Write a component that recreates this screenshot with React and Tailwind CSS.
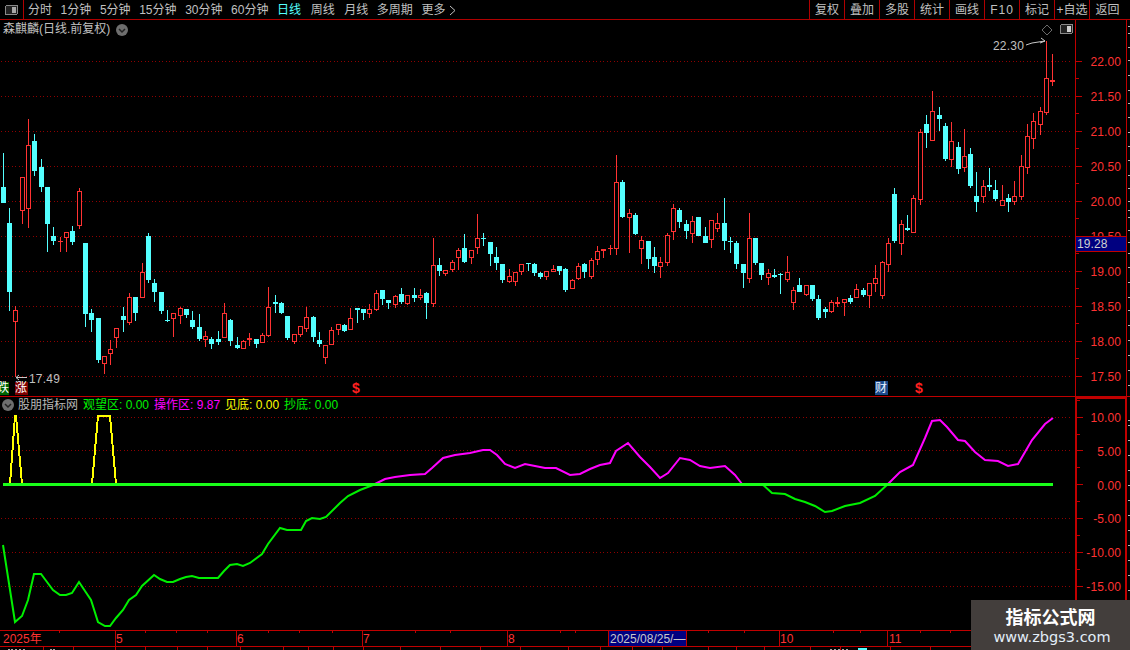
import React from "react";

const C = [
[3,153,187,203,203,0],[9,208,223,292,311,0],[15,306,310,322,377,1],[22,177,177,211,224,1],[28,119,145,209,228,1],[34,134,141,171,176,0],[41,159,167,187,192,0],[47,187,187,224,252,0],[53,227,236,241,245,0],[60,237,241,242,252,1],[66,232,232,238,252,1],[72,226,231,242,245,0],[79,188,191,226,229,1],[85,243,243,314,327,0],[91,309,313,320,332,0],[98,318,318,360,363,0],[104,356,356,364,374,1],[110,340,349,354,365,1],[116,328,328,338,348,1],[123,307,316,320,332,0],[129,293,297,323,325,1],[135,297,297,313,321,0],[142,263,272,298,298,1],[148,233,236,280,283,0],[154,279,283,292,302,0],[161,292,292,311,314,0],[167,310,320,321,322,0],[173,313,313,319,337,1],[180,307,308,316,324,1],[186,309,309,315,318,0],[192,311,320,327,329,0],[199,314,327,339,341,0],[205,331,336,340,347,1],[211,337,339,344,349,0],[218,331,339,342,345,0],[224,303,313,338,338,1],[230,319,320,341,346,0],[237,337,345,348,349,0],[243,340,341,349,349,1],[249,333,338,340,346,1],[256,339,339,344,348,0],[262,333,335,343,343,1],[268,287,307,336,337,1],[275,295,302,304,313,0],[281,302,303,313,314,0],[287,316,316,338,340,0],[294,334,334,342,344,1],[300,326,326,335,337,1],[306,307,317,329,332,1],[313,316,317,337,342,0],[319,332,340,344,347,0],[325,345,345,358,364,1],[331,327,330,345,345,1],[338,324,324,330,335,1],[344,324,325,331,332,0],[350,308,318,330,330,1],[357,308,308,310,323,0],[363,309,309,313,320,0],[369,304,309,314,318,1],[376,290,293,310,311,1],[382,290,290,299,305,0],[388,300,300,303,309,0],[395,295,296,305,308,1],[401,288,294,302,304,0],[407,295,295,304,305,1],[414,288,295,298,302,0],[420,289,295,298,300,1],[426,292,293,303,319,0],[433,238,265,304,307,1],[439,258,265,271,276,0],[445,270,270,274,276,1],[452,260,262,270,272,1],[458,248,250,258,270,1],[464,234,248,262,263,0],[471,250,250,258,264,1],[477,214,238,248,254,1],[483,233,238,239,246,0],[490,242,242,254,266,0],[496,247,257,263,270,0],[502,264,264,280,283,0],[509,269,276,282,283,1],[515,272,272,282,286,1],[521,264,264,272,275,1],[528,263,263,264,271,0],[534,263,264,273,276,0],[540,272,273,277,279,0],[546,271,271,277,280,1],[553,265,269,272,272,1],[559,266,266,271,275,0],[565,268,269,290,292,0],[572,279,280,289,289,1],[578,263,266,279,280,1],[584,263,264,272,278,0],[591,258,260,277,279,1],[597,246,251,260,265,1],[603,249,249,251,258,1],[610,245,248,249,255,1],[616,155,182,249,255,1],[622,180,182,217,218,0],[629,209,213,218,253,1],[635,213,215,234,235,0],[641,236,240,249,264,1],[648,241,241,259,269,0],[654,247,257,266,273,0],[660,257,262,267,278,1],[667,233,235,263,266,1],[673,204,208,232,240,1],[679,208,210,222,228,0],[686,220,224,231,239,0],[692,216,221,234,243,1],[698,217,217,236,236,0],[705,227,236,243,243,0],[711,220,220,240,248,1],[717,213,223,229,232,1],[724,198,223,241,250,0],[730,237,241,242,253,0],[736,241,243,264,269,0],[743,264,264,273,288,0],[749,213,238,279,283,1],[755,238,238,263,265,0],[761,263,263,275,280,0],[768,269,273,278,285,1],[774,269,275,277,278,0],[780,273,274,275,294,0],[787,256,272,280,282,1],[793,287,290,303,310,1],[799,278,285,292,292,0],[806,285,285,295,296,1],[812,285,285,299,301,0],[818,295,299,318,320,0],[825,307,309,312,318,0],[831,300,302,312,313,1],[837,297,302,304,307,1],[844,299,299,303,316,1],[850,295,298,302,304,0],[856,284,289,298,298,1],[863,288,290,295,297,0],[869,283,283,296,308,1],[875,265,278,284,292,1],[882,261,262,296,299,1],[888,238,243,265,272,1],[894,188,194,241,243,0],[901,220,224,244,255,1],[907,215,228,230,231,0],[913,195,198,233,233,1],[920,129,132,200,205,1],[926,115,124,133,148,0],[932,91,111,141,141,1],[939,107,115,119,131,0],[945,123,126,159,161,0],[951,122,141,160,167,1],[958,142,147,169,174,0],[964,129,156,168,172,1],[970,148,154,186,188,0],[976,172,196,202,212,0],[983,180,186,197,203,1],[989,168,185,187,191,0],[995,180,190,199,201,0],[1002,185,200,206,206,1],[1008,194,198,202,212,0],[1014,181,196,202,205,1],[1021,155,166,197,200,1],[1027,124,136,168,174,1],[1033,113,121,139,149,1],[1040,107,111,125,135,1],[1046,41,78,113,115,1],[1052,54,80,82,86,1],
];

const green1 = "3,545 15,622 22,616 28,600 34,574 41,574 47,582 53,590 60,595 66,595 72,593 79,582 85,591 91,600 98,622 105,626 110,626 116,618 123,610 129,600 136,595 142,586 154,575 160,579 167,582 173,582 180,579 186,577 192,576 199,578 218,578 224,571 230,565 237,564 243,566 250,563 262,554 268,544 280,528 287,530 301,530 306,521 312,518 320,519 326,517 340,503 348,496 360,490 373,485";
const magenta = "373,485 385,479 395,477 410,475 425,474 432,468 443,458 455,455 470,453 483,450 490,450 497,455 505,464 515,468 525,464 535,466 545,468 556,468 570,475 580,474 590,469 600,465 610,463 616,451 628,443 640,457 650,467 660,478 668,473 680,458 690,460 700,466 710,468 725,466 735,475 742,484";
const green2 = "742,484 762,484 772,493 785,494 795,499 805,502 815,506 825,512 832,511 845,506 860,503 875,496 888,484";
const magenta2 = "888,484 900,472 913,465 925,438 932,421 940,420 947,427 958,440 965,441 975,452 985,460 998,461 1008,466 1018,464 1032,440 1045,424 1053,418";

const font = "[font-family:'Liberation_Sans','Noto_Sans_CJK_SC',sans-serif]";

function Candles() {
  return C.map(([x, h, t, b, l, r], i) => {
    const col = r ? "#ff3232" : "#54ffff";
    const thin = b - t <= 1;
    return (
      <g key={i}>
        <rect x={x} y={h} width={1} height={Math.max(1, l - h)} fill={col} />
        {r && !thin ? (
          <rect x={x - 1.5} y={t + 0.5} width={4} height={b - t - 1} fill="#000" stroke={col} strokeWidth={1} />
        ) : (
          <rect x={x - 2} y={t} width={5} height={Math.max(1, b - t)} fill={col} />
        )}
      </g>
    );
  });
}

function Chevron({ className }) {
  return (
    <svg width="12" height="12" viewBox="0 0 12 12" className={className}>
      <circle cx="6" cy="6" r="6" fill="#6e6e6e" />
      <polyline points="3,5 6,8 9,5" fill="none" stroke="#222" strokeWidth="1.5" />
    </svg>
  );
}

function PanelIcon({ bright }) {
  return (
    <svg width="13" height="10" viewBox="0 0 13 10" shapeRendering="crispEdges">
      <rect x="0.5" y="0.5" width="12" height="9" rx="1.5" fill="#222" stroke="#8a8a8a" />
      <rect x="7" y="2" width="4" height="6" fill={bright ? "#d0d0d0" : "#a8a8a8"} />
    </svg>
  );
}

function Top() {
  const left = ["分时", "1分钟", "5分钟", "15分钟", "30分钟", "60分钟"];
  const right = ["复权", "叠加", "多股", "统计", "画线", "F10", "标记", "+自选", "返回"];
  return (
    <div className={`flex h-[20px] shrink-0 border-b border-[#b00000] text-[12px] leading-[19px] text-[#c0c0c0] ${font}`}>
      <div className="flex w-[24px] items-center justify-center border-r border-[#b00000]">
        <PanelIcon />
      </div>
      <div className="flex flex-1 gap-[8.6px] pl-[4px] pt-[1px]">
        {left.map((t) => <span key={t}>{t}</span>)}
        <span className="text-[#54ffff]">日线</span>
        <span className="ml-[1px]">周线</span>
        <span className="ml-[1px]">月线</span>
        <span>多周期</span>
        <span className="flex items-center gap-[4px]">
          更多
          <svg width="7" height="11" viewBox="0 0 7 11"><polyline points="1,1 6,5.5 1,10" fill="none" stroke="#c0c0c0" /></svg>
        </span>
      </div>
      <div className="flex">
        {right.map((t) => (
          <div key={t} className={`flex items-center justify-center border-l border-[#b00000] pt-[1px] ${t === "返回" ? "w-[41px] pr-[5px]" : t === "F10" ? "w-[35px] tracking-[1px]" : "w-[35px]"}`}>{t}</div>
        ))}
      </div>
    </div>
  );
}

const dotted = "1 2.5";

function UpperChart() {
  const ys = [61, 96, 131, 166, 201, 236, 271, 306, 341, 376];
  return (
    <svg width="1075" height="376" viewBox="0 20 1075 376" className="block" shapeRendering="crispEdges">
      {ys.map((y) => (
        <line key={y} x1="1" x2="1071" y1={y + 0.5} y2={y + 0.5} stroke="#900000" strokeDasharray={dotted} />
      ))}
      <Candles />
      <g fill="none" stroke="#c8c8c8" shapeRendering="auto">
        <polyline points="1026,45 1032,43 1045,41" />
        <polyline points="1041,38 1045,41 1040,43" />
        <polyline points="27,377.5 16,377.5" />
        <polyline points="19,375 16,377.5 19,380" />
        <polygon points="1047,25 1052,30 1047,35 1042,30" stroke="#6a6a6a" />
      </g>
    </svg>
  );
}

function LowerChart() {
  const ys = [417, 450, 518, 552, 586];
  return (
    <svg width="1075" height="233" viewBox="0 397 1075 233" className="block" shapeRendering="crispEdges">
      {ys.map((y) => (
        <line key={y} x1="1" x2="1071" y1={y + 0.5} y2={y + 0.5} stroke="#900000" strokeDasharray={dotted} />
      ))}
      <polyline points="10,484 15,416 16,416 22,484" fill="none" stroke="#ffff00" strokeWidth="2" />
      <polyline points="92,484 98,416 110,416 116,484" fill="none" stroke="#ffff00" strokeWidth="2" />
      <polyline points={green1} fill="none" stroke="#00f000" strokeWidth="2" shapeRendering="auto" />
      <polyline points={magenta} fill="none" stroke="#ff00ff" strokeWidth="2" shapeRendering="auto" />
      <polyline points={green2} fill="none" stroke="#00f000" strokeWidth="2" shapeRendering="auto" />
      <polyline points={magenta2} fill="none" stroke="#ff00ff" strokeWidth="2" shapeRendering="auto" />
      <rect x="3" y="483" width="1050" height="3" fill="#19ff19" />
    </svg>
  );
}

function AxisTicks({ height, major, minor, offset, w }) {
  return (
    <svg width="8" height={height} className="absolute left-0 top-0" shapeRendering="crispEdges">
      {major.map((y) => <rect key={y} x="0" y={y - offset} width={w} height={1} fill="#c00000" />)}
      {minor.map((y) => <rect key={y} x="0" y={y - offset} width={3} height={1} fill="#c00000" />)}
    </svg>
  );
}

function SideDashes() {
  const ys = [26, 33, 47, 60, 75, 90, 103, 117, 132, 146, 160, 175, 188, 201, 210, 217, 230, 242, 253, 267, 282, 297, 310, 325, 340, 355, 370, 385, 420, 425, 440, 455, 470, 485, 500, 515, 530, 545, 560, 575, 590, 605, 620];
  return (
    <svg width="3" height="630" className="absolute right-0 top-0" shapeRendering="crispEdges">
      {ys.map((y) => <rect key={y} x="1" y={y} width="2" height="1" fill="#b8b8b8" />)}
    </svg>
  );
}

function TimeAxis() {
  const items = [
    ["2025年", 3], ["5", 116], ["6", 237], ["7", 363], ["8", 508],
  ];
  const seps = [115, 236, 362, 507, 779, 887];
  const topTicks = [59, 145, 176, 207, 268, 299, 332, 415, 450, 560, 575, 708, 744, 833, 860, 920, 950];
  const botTicks = [43, 73, 115, 145, 177, 207, 240, 283, 308, 333, 363, 400, 440, 480, 520, 568, 600, 632, 662, 708, 736, 764, 810, 840, 890, 930];
  const frags = [8, 11, 15, 19, 23, 50, 53, 830, 834, 838, 842, 846];
  return (
    <>
      <div className={`relative flex h-[17px] shrink-0 border-y border-[#c00000] text-[12px] leading-[15px] text-[#ff3232] ${font}`}>
        <svg width="1130" height="15" className="absolute left-0 top-0" shapeRendering="crispEdges">
          {seps.map((x) => <rect key={x} x={x} y="0" width="1" height="15" fill="#c00000" />)}
          {topTicks.map((x) => <rect key={x} x={x} y="0" width="1" height="2" fill="#c00000" />)}
        </svg>
        {items.map(([t, x]) => (
          <span key={t} style={{ left: x }} className="absolute top-[1px]">{t}</span>
        ))}
        <span className="absolute left-[780px] top-[1px]">10</span>
        <span className="absolute left-[889px] top-[1px]">11</span>
        <span className="absolute left-[608px] top-[-1px] h-[17px] w-[79px] border border-[#c00000] bg-[#000080] pl-[1px] pt-[1px] text-[#c8c8c8]">2025/08/25/—</span>
      </div>
      <div className="relative h-[3px] overflow-hidden">
        <svg width="1130" height="3" className="absolute left-0 top-0" shapeRendering="crispEdges">
          {botTicks.map((x) => <rect key={x} x={x} y="0" width="1" height="3" fill="#c00000" />)}
          {frags.map((x) => <rect key={x} x={x} y="2" width="2" height="1" fill="#a8a8a8" />)}
          <rect x="858" y="1" width="9" height="2" fill="#54ffff" />
        </svg>
      </div>
    </>
  );
}

export default function App() {
  const upperLabels = ["22.00", "21.50", "21.00", "20.50", "20.00", "19.50", "19.00", "18.50", "18.00", "17.50"];
  const lowerLabels = ["10.00", "5.00", "0.00", "-5.00", "-10.00", "-15.00"];
  const upMajor = [61, 96, 131, 166, 201, 236, 271, 306, 341, 376];
  const upMinor = [78, 113, 148, 183, 218, 253, 288, 323, 358];
  const lowMajor = [417, 450, 484, 518, 552, 586];
  const lowMinor = [400, 434, 467, 501, 535, 569, 603, 620];
  return (
    <div className="relative flex h-[650px] w-[1130px] flex-col overflow-hidden bg-black">
      <Top />
      {/* upper pane */}
      <div className="flex h-[377px] shrink-0 border-b border-[#c00000]">
        <div className={`relative w-[1075px] shrink-0 text-[12px] text-[#c0c0c0] ${font}`}>
          <UpperChart />
          <div className="absolute left-[3px] top-[1px] flex items-center gap-[6px] leading-[17px]">
            <span>森麒麟(日线.前复权)</span>
            <Chevron />
          </div>
          <div className="absolute left-[1060px] top-[4px]"><PanelIcon bright /></div>
          <span className="absolute left-[993px] top-[19px] leading-[14px] tracking-[0.2px]">22.30</span>
          <span className="absolute left-[29px] top-[352px] leading-[14px] tracking-[0.2px]">17.49</span>
          <span className="absolute left-[-3px] top-[362px] h-[13px] w-[12px] bg-[#006400] text-[12px] leading-[13px] text-white">跌</span>
          <span className="absolute left-[15px] top-[362px] h-[13px] w-[13px] bg-[#800000] text-[12px] leading-[13px] text-white">涨</span>
          <span className="absolute left-[352px] top-[361px] text-[14px] font-bold leading-[14px] text-[#ff2020]">$</span>
          <span className="absolute left-[875px] top-[361px] h-[14px] w-[13px] bg-[#1c4a8c] text-[12px] leading-[14px] text-[#e8f0ff]">财</span>
          <span className="absolute left-[915px] top-[361px] text-[14px] font-bold leading-[14px] text-[#ff2020]">$</span>
        </div>
        <div className={`relative w-[52px] shrink-0 border-x border-[#c00000] pt-[25px] text-[12px] leading-[35px] text-[#ff3232] ${font}`}>
          <AxisTicks height={376} major={upMajor} minor={upMinor} offset={20} w={6} />
          {upperLabels.map((t) => (
            <div key={t} className="h-[35px] pr-[5px] text-right tracking-[0.1px]">{t}</div>
          ))}
          <div className="absolute left-0 top-[216px] h-[16px] w-[50px] border-y border-[#c00000] bg-[#000080] pl-[1px] text-[12px] leading-[14px] tracking-[0.1px] text-[#d0d0d0]">19.28</div>
        </div>
      </div>
      {/* lower pane */}
      <div className="flex h-[233px] shrink-0">
        <div className={`relative w-[1075px] shrink-0 text-[12px] ${font}`}>
          <LowerChart />
          <div className="absolute left-[2px] top-0 flex items-center gap-[5px] leading-[16px]">
            <Chevron />
            <span className="ml-[-1px] text-[#b8b8b8]">股朋指标网</span>
            <span className="text-[#00f000]">观望区: 0.00</span>
            <span className="text-[#ff00ff]">操作区: 9.87</span>
            <span className="text-[#ffff00]">见底: 0.00</span>
            <span className="text-[#00f000]">抄底: 0.00</span>
          </div>
        </div>
        <div className={`relative w-[52px] shrink-0 border-x-2 border-t-2 border-[#c00000] pt-[2px] text-[12px] leading-[34px] text-[#ff3232] ${font}`}>
          <AxisTicks height={231} major={lowMajor} minor={lowMinor} offset={399} w={6} />
          {lowerLabels.map((t) => (
            <div key={t} className="h-[33.8px] pr-[4px] text-right tracking-[0.1px]">{t}</div>
          ))}
        </div>
      </div>
      <TimeAxis />
      <SideDashes />
      {/* watermark */}
      <div className="absolute bottom-0 right-0 flex h-[50px] w-[159px] flex-col items-center bg-[#433e3c] pt-[5px]">
        <div className="text-[18px] font-bold leading-[22px] text-white [font-family:'Noto_Sans_CJK_SC',sans-serif]">指标公式网</div>
        <div className="pl-[3px] text-[14.5px] leading-[20px] text-[#e2edf8] [font-family:'DejaVu_Sans',sans-serif]">www.zbgs3.com</div>
      </div>
    </div>
  );
}
